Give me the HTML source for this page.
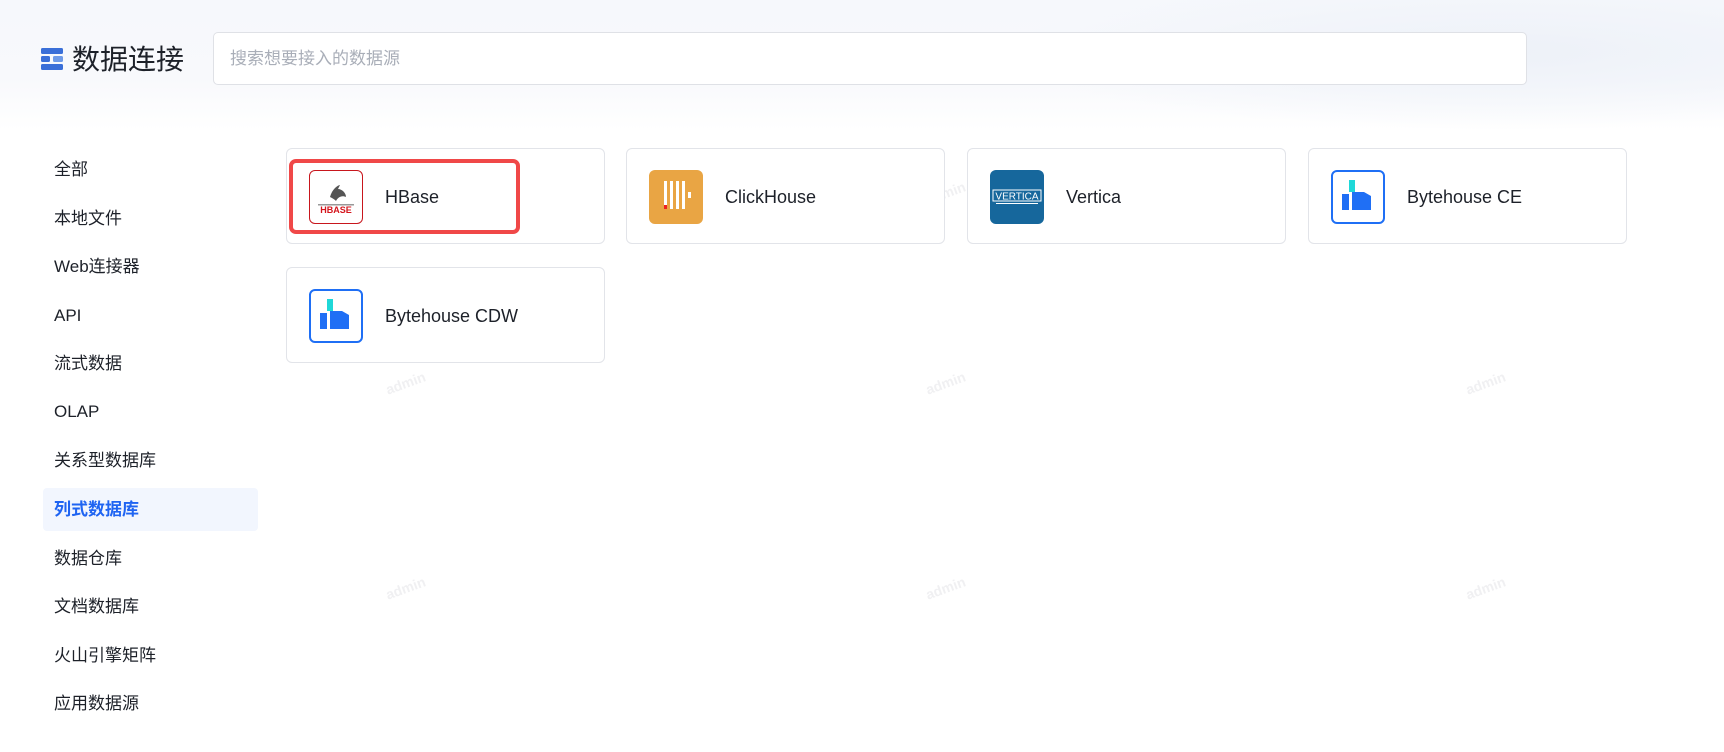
<!DOCTYPE html>
<html><head><meta charset="utf-8"><style>
*{margin:0;padding:0;box-sizing:border-box}
body{width:1724px;height:752px;background:#fff;font-family:"Liberation Sans","Noto Sans CJK SC",sans-serif;position:relative;overflow:hidden;color:#1d2129}
.hdr{position:absolute;left:0;top:0;width:1724px;height:130px;background:linear-gradient(180deg,#f6f8fc 0%,#f8f9fc 60%,#fff 100%)}
.deco{position:absolute;left:1000px;top:0;width:724px;height:130px;background:radial-gradient(ellipse at 70% 40%,#edf1f8 0%,rgba(240,243,249,0) 70%)}
.title{position:absolute;left:72px;top:42px;font-size:28px;color:#1d2129;line-height:36px}
.search{position:absolute;left:213px;top:32px;width:1314px;height:53px;background:#fff;border:1px solid #dfe1e6;border-radius:5px;font-size:17px;color:#a9aeb8;padding:0 16px;line-height:51px}
.nav{position:absolute;left:54px;font-size:17px;color:#1d2129;line-height:24px}
.act{position:absolute;left:43px;top:488px;width:215px;height:43px;background:#f2f6fe;border-radius:4px}
.card{position:absolute;width:319px;height:96px;border:1px solid #e2e4e9;border-radius:6px;background:#fff}
.ico{position:absolute;left:22px;top:21px;width:54px;height:54px;border-radius:6px;overflow:hidden}
.name{position:absolute;left:98px;top:36px;font-size:18px;line-height:24px;color:#1d2129}
.wm{position:absolute;font-size:14px;color:#f0f0f2;transform:rotate(-20deg);font-weight:bold}
</style></head><body>
<div class="hdr"></div><div class="deco"></div>
<svg style="position:absolute;left:41px;top:48px" width="22" height="23" viewBox="0 0 22 23">
<rect x="0" y="0" width="22" height="6" rx="1.5" fill="#3a6fd8"/>
<rect x="0" y="8" width="9" height="6" rx="1.5" fill="#3a6fd8"/>
<rect x="12" y="8" width="10" height="6" rx="1.5" fill="#6f9be8"/>
<rect x="0" y="16" width="22" height="6" rx="1.5" fill="#3a6fd8"/>
</svg>
<div class="title">数据连接</div>
<div class="search">搜索想要接入的数据源</div>

<div class="act"></div>
<div class="nav" style="top:158px">全部</div>
<div class="nav" style="top:207px">本地文件</div>
<div class="nav" style="top:255px">Web连接器</div>
<div class="nav" style="top:304px">API</div>
<div class="nav" style="top:352px">流式数据</div>
<div class="nav" style="top:400px">OLAP</div>
<div class="nav" style="top:449px">关系型数据库</div>
<div class="nav" style="top:498px;color:#1f64f2;font-weight:bold">列式数据库</div>
<div class="nav" style="top:547px">数据仓库</div>
<div class="nav" style="top:595px">文档数据库</div>
<div class="nav" style="top:644px">火山引擎矩阵</div>
<div class="nav" style="top:692px">应用数据源</div>

<div class="wm" style="left:420px;top:185px">admin</div>
<div class="wm" style="left:925px;top:185px">admin</div>
<div class="wm" style="left:1465px;top:185px">admin</div>
<div class="wm" style="left:385px;top:375px">admin</div>
<div class="wm" style="left:925px;top:375px">admin</div>
<div class="wm" style="left:1465px;top:375px">admin</div>
<div class="wm" style="left:385px;top:580px">admin</div>
<div class="wm" style="left:925px;top:580px">admin</div>
<div class="wm" style="left:1465px;top:580px">admin</div>

<div class="card" style="left:286px;top:148px">
<div class="ico" style="border:1px solid #c8161d;background:#fff">
<svg width="52" height="52" viewBox="0 0 52 52"><path d="M20 26 C22 18 28 14 30 14 L28 18 C32 18 36 22 36 26 C32 24 28 26 26 30 C24 28 22 27 20 26Z" fill="#555"/>
<rect x="8" y="33" width="36" height="1.5" fill="#999"/><text x="26" y="42" font-size="9" font-weight="bold" fill="#d4141c" text-anchor="middle" font-family="Liberation Sans">HBASE</text></svg>
</div><div class="name">HBase</div></div>
<div style="position:absolute;left:289px;top:159px;width:231px;height:75px;border:4px solid #f04848;border-radius:7px"></div>

<div class="card" style="left:626px;top:148px">
<div class="ico" style="background:#e9a544">
<svg width="54" height="54"><rect x="15" y="11" width="3" height="28" fill="#fff"/><rect x="21" y="11" width="3" height="28" fill="#fff"/><rect x="27" y="11" width="3" height="28" fill="#fff"/><rect x="33" y="11" width="3" height="28" fill="#fff"/><rect x="39" y="22" width="3" height="6" fill="#fff"/><rect x="15" y="35" width="3" height="4" fill="#e22"/></svg>
</div><div class="name">ClickHouse</div></div>

<div class="card" style="left:967px;top:148px">
<div class="ico" style="background:#16679c">
<svg width="54" height="54"><rect x="3" y="20" width="48" height="11" fill="none" stroke="#fff" stroke-width="1"/><text x="27" y="29.5" font-size="10" fill="#fff" text-anchor="middle" font-family="Liberation Sans">VERTICA</text><rect x="6" y="33" width="42" height="1" fill="#fff"/></svg>
</div><div class="name">Vertica</div></div>

<div class="card" style="left:1308px;top:148px">
<div class="ico" style="border:2px solid #1f6ff5;background:#fff">
<svg width="50" height="50"><rect x="16" y="8" width="6" height="12" fill="#1fd8d8"/><rect x="9" y="22" width="7" height="16" fill="#1f6ff5"/><path d="M19 20 L31 20 L38 24 L38 38 L19 38Z" fill="#1f6ff5"/></svg>
</div><div class="name">Bytehouse CE</div></div>

<div class="card" style="left:286px;top:267px">
<div class="ico" style="border:2px solid #1f6ff5;background:#fff">
<svg width="50" height="50"><rect x="16" y="8" width="6" height="12" fill="#1fd8d8"/><rect x="9" y="22" width="7" height="16" fill="#1f6ff5"/><path d="M19 20 L31 20 L38 24 L38 38 L19 38Z" fill="#1f6ff5"/></svg>
</div><div class="name">Bytehouse CDW</div></div>
</body></html>
